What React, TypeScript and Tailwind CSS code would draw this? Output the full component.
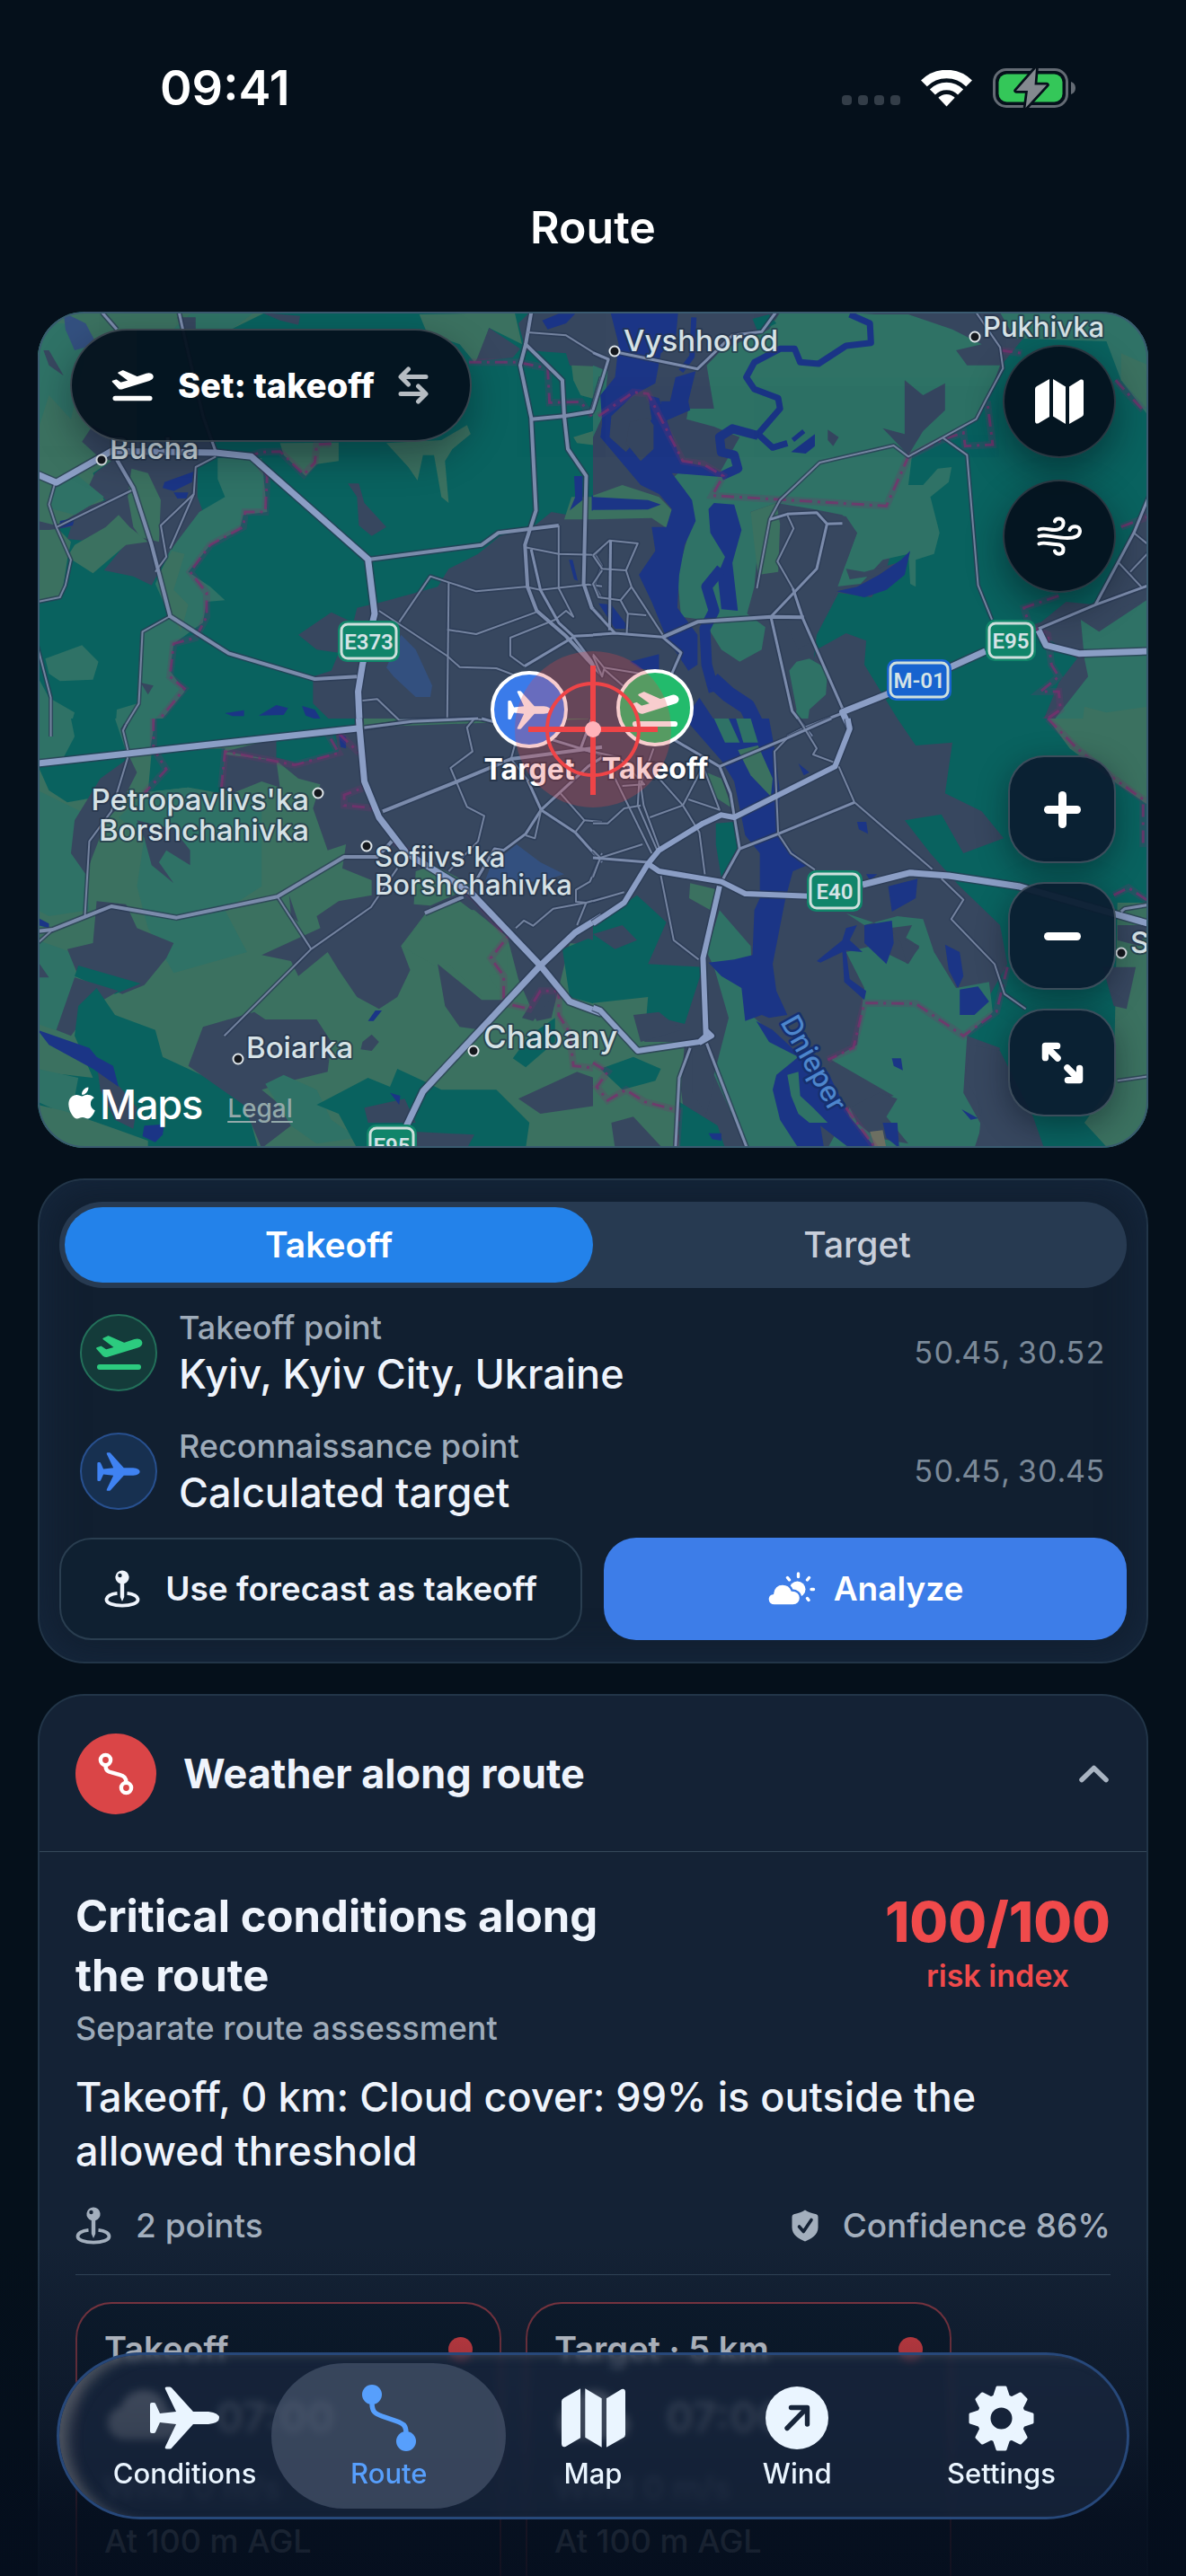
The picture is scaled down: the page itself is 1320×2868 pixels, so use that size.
import { useState } from "react";
import type { ReactNode } from "react";
import { FaApple } from "react-icons/fa";
import { BsCloudFill } from "react-icons/bs";

type IconProps = { className?: string };

/* ---------- icons ---------- */

function PlaneTakeoff({ className }: IconProps) {
  return (
    <svg viewBox="0 0 47 35" className={className} fill="currentColor" aria-hidden="true">
      <path
        d="M1.5 12.6L5.4 11.2L10.4 14.6L19.8 11.9L8 3.2L12.8 1L28.6 7.9L39 4.4C43 3.1 45.6 4.8 45.9 6.8C46.2 9 44.4 10.5 42 11.3L12 20.6C10.4 21 9.2 20.9 8 19.8Z"
        stroke="currentColor"
        strokeWidth="1.6"
        strokeLinejoin="round"
      />
      <rect x="1.5" y="28.8" width="44" height="5.4" rx="2.7" />
    </svg>
  );
}

function Airplane({ className }: IconProps) {
  return (
    <svg viewBox="0 0 77 70" className={className} fill="currentColor" aria-hidden="true">
      <path d="M0 20Q0 18 2 18H4Q5.5 18 6 19L11 30L29 28L17 3Q16 .5 18.5 .5H22Q23.5 .5 24.5 2L48 28H65Q77 29.5 77 35Q77 40.5 65 42H48L24.5 68Q23.5 69.5 22 69.5H18.5Q16 69.5 17 67L29 42L11 40L6 51Q5.5 52 4 52H2Q0 52 0 50Z" />
    </svg>
  );
}

function MapIcon({ className }: IconProps) {
  return (
    <svg viewBox="0 0 54 50" className={className} fill="currentColor" aria-hidden="true">
      <path d="M2 8L16 0V42L3.4 49.4Q0 50.4 0 46.5V11Q0 9 2 8Z" />
      <path d="M20 0L34 8.5V50L20 41.5Z" />
      <path d="M38 8.5L50.8 .6Q54 -.4 54 3.2V39Q54 41 52 42L38 50Z" />
    </svg>
  );
}

function WindIcon({ className }: IconProps) {
  return (
    <svg
      viewBox="0 0 50 46"
      className={className}
      fill="none"
      stroke="currentColor"
      strokeWidth="4"
      strokeLinecap="round"
      aria-hidden="true"
    >
      <path d="M2.5 15.5C8 13 13 16 20 16C27 16 30 12 29.5 7.5C29 2.5 21 2 20 6.5" />
      <path d="M2.5 23C10 20 18 25 34 25C43 25 48 22 48 17C48 11 38 10.5 36.5 16" />
      <path d="M2.5 31.5C8 29 14 32 21 32C27 32 29.5 34.5 29.5 38C29.5 44 21 44 20 39.5" />
    </svg>
  );
}

function SwapIcon({ className }: IconProps) {
  return (
    <svg
      viewBox="0 0 34 42"
      className={className}
      fill="none"
      stroke="currentColor"
      strokeWidth="5"
      strokeLinecap="round"
      strokeLinejoin="round"
      aria-hidden="true"
    >
      <path d="M31 11.5H4M11.5 3L3 11.5L11.5 20" />
      <path d="M3 30.5H30M22.5 22L31 30.5L22.5 39" />
    </svg>
  );
}

function RouteSolid({ className }: IconProps) {
  return (
    <svg viewBox="0 0 60 74" className={className} fill="currentColor" aria-hidden="true">
      <circle cx="11" cy="11" r="11" />
      <circle cx="49" cy="63" r="11" />
      <path
        d="M11 20C11 30 14 32 22 35L38 40.5C46 43.5 49 45 49 54"
        fill="none"
        stroke="currentColor"
        strokeWidth="5.5"
      />
    </svg>
  );
}

function RouteOutline({ className }: IconProps) {
  return (
    <svg
      viewBox="0 0 40 48"
      className={className}
      fill="none"
      stroke="currentColor"
      strokeWidth="4.4"
      aria-hidden="true"
    >
      <circle cx="8.5" cy="8.5" r="5.6" />
      <circle cx="31.5" cy="39.5" r="5.6" />
      <path d="M8.5 14C8.5 20.5 11 21.5 16 22.7L24 24.8C29 26.2 31.5 28 31.5 34" />
    </svg>
  );
}

function PinIcon({ className }: IconProps) {
  return (
    <svg viewBox="0 0 40 42" className={className} aria-hidden="true">
      <path
        fill="currentColor"
        fillRule="evenodd"
        d="M20 .5A7.5 7.5 0 0 1 22.2 15.2V30L20 35L17.8 30V15.2A7.5 7.5 0 0 1 20 .5ZM17.5 3.8A2.2 2.2 0 1 0 17.5 8.2A2.2 2.2 0 1 0 17.5 3.8Z"
      />
      <path
        fill="none"
        stroke="currentColor"
        strokeWidth="3.8"
        d="M14.5 25.8C7 26.5 2.5 29.5 2.5 33C2.5 36.8 10 39.6 20 39.6S37.5 36.8 37.5 33C37.5 29.5 33 26.5 25.5 25.8"
      />
    </svg>
  );
}

function CloudSunIcon({ className }: IconProps) {
  return (
    <svg viewBox="0 0 54 38" className={className} aria-hidden="true">
      <circle cx="33.5" cy="19.5" r="9" fill="currentColor" />
      <g stroke="currentColor" strokeWidth="3.4" strokeLinecap="round">
        <path d="M34.5 2V5.5M22.5 6.5L24.5 9M46.5 6.5L44.5 9M49 19.5H51.5M46 31.5L44.5 29.5" />
      </g>
      <path
        d="M8 37.5C3.5 37.5 .5 34.5 .5 30.5C.5 27 3 24.5 6 24C6.5 17.5 11 13.5 17 13.5C22.5 13.5 26 16.5 27.5 20.5C33 20.5 37 24 37 29C37 34 33.5 37.5 28.5 37.5Z"
        fill="currentColor"
        stroke="#3d7de8"
        strokeWidth="2.4"
      />
    </svg>
  );
}

function ShieldCheck({ className }: IconProps) {
  return (
    <svg viewBox="0 0 30 36" className={className} aria-hidden="true">
      <path
        fill="currentColor"
        d="M15 .5C18 2.5 22 4 27.5 5.2Q29.5 5.8 29.5 8V20C29.5 28 22 32.5 15 35.5C8 32.5 .5 28 .5 20V8Q.5 5.8 2.5 5.2C8 4 12 2.5 15 .5Z"
      />
      <path
        d="M8.5 19L13.3 24.5L22 11.5"
        fill="none"
        stroke="#142235"
        strokeWidth="3.6"
        strokeLinecap="round"
        strokeLinejoin="round"
      />
    </svg>
  );
}

function ExpandIcon({ className }: IconProps) {
  return (
    <svg
      viewBox="0 0 48 48"
      className={className}
      fill="none"
      stroke="currentColor"
      strokeWidth="7.5"
      strokeLinecap="round"
      strokeLinejoin="round"
      aria-hidden="true"
    >
      <path d="M18 4.5H4.5V18M6 6L18.5 18.5" />
      <path d="M30 43.5H43.5V30M42 42L29.5 29.5" />
    </svg>
  );
}

function WindTabIcon({ className }: IconProps) {
  return (
    <svg viewBox="0 0 70 70" className={className} aria-hidden="true">
      <circle cx="35" cy="35" r="35" fill="currentColor" />
      <path
        d="M24 46.5L46 24M28.5 23.5H46.5V42"
        fill="none"
        stroke="#17253a"
        strokeWidth="5.4"
        strokeLinecap="round"
        strokeLinejoin="round"
      />
    </svg>
  );
}

function GearIcon({ className }: IconProps) {
  return (
    <svg viewBox="-36.5 -36.5 73 73" className={className} aria-hidden="true">
      <circle r="19.5" fill="none" stroke="currentColor" strokeWidth="15" />
      {[0, 45, 90, 135, 180, 225, 270, 315].map((a) => (
        <path
          key={a}
          d="M-8 -24L-4.5 -34.5H4.5L8 -24Z"
          transform={`rotate(${a})`}
          fill="currentColor"
          stroke="currentColor"
          strokeWidth="3"
          strokeLinejoin="round"
        />
      ))}
    </svg>
  );
}

function WifiIcon({ className }: IconProps) {
  return (
    <svg viewBox="0 0 57 41" className={className} fill="none" stroke="currentColor" aria-hidden="true">
      <path d="M3.4 14.9A35.5 35.5 0 0 1 53.6 14.9" strokeWidth="9.5" />
      <path d="M12.9 24.4A22 22 0 0 1 44.1 24.4" strokeWidth="8.5" />
      <path d="M28.5 40.5L19.3 30.8A13 13 0 0 1 37.7 30.8Z" fill="currentColor" stroke="none" />
    </svg>
  );
}

function BatteryIcon({ className }: IconProps) {
  return (
    <svg viewBox="0 0 92 46" className={className} aria-hidden="true">
      <rect x="1.5" y="2.5" width="81" height="41" rx="13.5" fill="none" stroke="#646b74" strokeWidth="3" />
      <path d="M87 16V30C90 29 92 26.5 92 23S90 17 87 16Z" fill="#646b74" />
      <rect x="6.5" y="7.5" width="71" height="31" rx="9" fill="#34c759" />
      <path
        d="M48 1L26 26H39L36.5 45L60 19.5H46.5Z"
        fill="#83898f"
        stroke="#06101b"
        strokeWidth="5.5"
        strokeLinejoin="round"
        paintOrder="stroke"
      />
    </svg>
  );
}

/* ---------- map ---------- */

const C = {
  urban: "#37475f",
  forest: "#09625f",
  meadow: "#2f7266",
  field: "#3b7160",
  water: "#1b3586",
  park: "#33507f",
};

type Area = [string, string];
type Road = [number, string];
type Sheet = { x: number; y: number; areas: Area[]; water: Road[]; borders: string[]; roads: Road[] };

const sheets: Sheet[] = [
  {
    x: 30,
    y: 340,
    areas: [
      [C.forest, "0,0 1570,0 1570,1382 0,1382"],
      [C.field, "29,24 650,24 560,78 300,80 300,450 180,450 230,520 180,560 210,650 80,740 120,790 110,850 95,970 29,990"],
      [C.meadow, "29,60 130,60 160,160 120,380 60,300 29,420"],
      [C.meadow, "450,24 620,24 560,78 400,78"],
      [C.field, "690,460 850,458 850,520 790,530 760,570 700,500"],
      [C.park, "100,24 160,60 190,130 130,150 105,80"],
      [C.urban, "60,150 100,235 60,200 45,150"],
      [C.urban, "640,24 745,35 740,65 690,50"],
      [C.urban, "410,40 460,40 460,78 420,78"],
      [C.urban, "150,455 180,400 260,455 510,455 525,500 465,540 465,640 480,690 440,760 385,830 340,935 290,905 210,885 260,810 270,770 235,735 150,785 110,780 120,740 60,750 30,750 30,720 80,735 170,670 215,650 170,600 185,560 230,520 190,500"],
      [C.meadow, "80,600 130,560 210,640 130,700 70,680 60,630"],
      [C.field, "285,545 330,560 365,650 360,790 310,775 290,740 275,640"],
      [C.field, "250,700 280,740 330,790 270,800 180,895 110,840 130,800 215,740"],
      [C.meadow, "520,510 640,510 655,690 590,700 580,750 500,800 440,890 500,940 540,985 490,990 480,1060 400,1130 390,1220 430,1290 370,1380 340,1440 240,1440 245,1350 300,1330 310,1090 390,1040 350,930 390,820 470,690 540,640 520,580"],
      [C.field, "395,820 430,830 400,950 440,1000 420,1090 380,1000 355,910"],
      [C.meadow, "50,1180 150,1135 195,1190 180,1250 90,1255 60,1230"],
      [C.meadow, "29,1240 60,1310 130,1360 110,1440 29,1440"],
      [C.urban, "60,1440 110,1400 130,1440"],
      [C.urban, "310,1260 345,1270 330,1300"],
      [C.field, "980,460 1130,450 1200,400 1210,430 1160,480 1140,520 1150,660 1130,640 1110,500 1080,500 1065,585 1040,540"],
      [C.urban, "875,595 905,595 920,660 980,740 940,770 905,735 900,640"],
      [C.urban, "1568,720 1430,690 1380,740 1290,770 1230,830 1150,880 1120,940 970,990 900,1010 890,1060 830,1025 740,1100 790,1150 850,1160 830,1220 780,1240 780,1330 830,1390 820,1440 1568,1440"],
      [C.urban, "1370,24 1568,24 1568,230 1480,200 1470,160 1360,150 1340,60"],
      [C.field, "1070,30 1330,24 1350,130 1260,75 1235,170 1220,190 1180,130 1090,90"],
      [C.urban, "1260,75 1345,145 1325,175 1225,185"],
      [C.field, "1485,200 1568,205 1568,320 1510,300 1490,250"],
      [C.field, "1490,440 1568,410 1568,470 1500,460"],
      [C.field, "1485,640 1568,640 1568,715 1465,715"],
      [C.water, "375,590 455,555 450,590 400,620 370,610"],
      [C.water, "400,625 440,625 435,645 410,645"],
      [C.water, "90,720 130,710 125,735 90,745"],
      [C.water, "1405,50 1450,28 1495,28 1470,60 1420,80"],
      [C.water, "1492,570 1515,570 1515,650 1480,685 1495,640"],
      [C.water, "1540,635 1570,635 1570,685 1540,685"],
      [C.water, "540,1362 592,1352 592,1372 560,1372"],
      [C.water, "632,1370 680,1335 712,1345 700,1368"],
      [C.water, "750,1338 785,1350 805,1390 760,1370"],
      [C.water, "1478,850 1488,850 1502,920 1492,915"],
      [C.park, "980,1210 1020,1100 1060,1150 1105,1270 1100,1308 1060,1308 1000,1240"],
    ],
    water: [],
    borders: [
      "1205,190 1340,190 1420,210 1425,325 1510,322 1540,370",
      "830,462 790,465 785,525 755,565 690,488 640,490 615,500 655,570 650,690 595,690 590,740 500,800 445,890 490,960 490,1040 460,1110 400,1130 390,1240 430,1280 350,1400 345,1440",
    ],
    roads: [
      [3, "75,600 60,665 80,740 120,850 105,935 90,975 29,990"],
      [3, "82,740 285,618"],
      [3, "515,505 460,540 455,630 365,735 380,840 350,890"],
      [3, "455,630 390,812"],
      [3, "390,1038 315,1090 305,1330 260,1420"],
      [3, "29,1140 65,1310 65,1440"],
      [3, "1015,1058 1100,905 1150,925 1225,955 1360,940 1400,950 1530,932 1568,938"],
      [3, "1150,925 1146,1380"],
      [3, "960,1020 1145,1170 1180,1208 1280,1212 1340,1240"],
      [3, "1146,1083 1225,1098 1388,1025"],
      [3, "1450,735 1450,945 1490,1040 1470,1020 1440,1050 1318,1110 1318,1170 1357,1205"],
      [4, "1375,815 1400,950 1450,1060 1490,1105 1568,1100"],
      [4, "1357,1205 1490,1108 1568,1235"],
      [3, "1358,808 1450,830 1550,833 1568,810"],
      [3, "1550,833 1568,870 1548,935 1568,980"],
      [3, "915,1320 955,1315 1015,1385 1220,1380 1300,1395"],
      [4, "920,1412 1050,1388"],
      [4, "205,24 245,80"],
      [4, "415,24 425,80 480,370 515,490"],
      [5, "245,515 290,610 340,800 390,1038 550,1162 785,1248 900,1240"],
      [5, "935,848 1240,800 1285,760 1450,735"],
      [5, "1375,24 1360,130 1345,200 1375,375 1388,685 1358,800 1365,940 1390,1020 1470,1105 1568,1235"],
      [5, "1360,130 1460,250 1465,370 1475,480 1525,570 1518,930 1540,1010 1568,1045"],
      [5, "1375,380 1465,370 1540,355 1568,240"],
      [3, "1365,90 1470,100 1568,175"],
      [8, "29,565 80,592 190,515 230,487 515,492 612,505 930,848 948,1030 915,1200 903,1290 907,1400"],
    ],
  },
  {
    x: 660,
    y: 340,
    areas: [
      [C.urban, "0,0 1570,0 1570,1382 0,1382"],
      [C.forest, "860,500 960,440 1050,380 1120,190 1180,100 1515,100 1515,640 1430,860 1370,1000 1190,1070 1320,1180 1270,1260 1230,1380 1270,1440 860,1440 810,1340 740,1200 745,1120 690,1095 610,1150 570,1300 600,1200 610,1100 670,960 760,975 800,880 860,640"],
      [C.meadow, "510,24 690,24 770,30 860,30 980,80 1060,130 990,150 1020,200 1110,200 1080,300 1045,380 960,440 870,500 860,600 900,600 940,545 978,540 970,590 920,640 945,760 930,830 880,850 880,940 865,930 860,830 790,850 730,930 660,940 690,860 720,760 680,700 600,680 500,660 430,690 450,800 440,940 420,1030 470,1075 460,1150 400,1190 350,1150 300,1050 240,1040 230,900 270,720 215,580 260,530 345,560 400,440 330,405 255,380 260,345 330,345 310,200 350,150 480,80"],
      [C.field, "430,690 500,660 510,730 505,890 450,900 440,800"],
      [C.urban, "535,720 620,690 690,705 720,760 690,860 650,1000 600,1120 560,1150 500,1000 545,940 510,860"],
      [C.meadow, "555,1190 590,1180 640,1215 635,1300 590,1350 580,1440 540,1440 555,1350 535,1220"],
      [C.urban, "850,250 900,300 960,260 960,350 900,420 860,500 790,410 850,430"],
      [C.urban, "640,415 670,440 655,470 640,450"],
      [C.urban, "690,880 740,890 860,850 780,900 700,915"],
      [C.forest, "435,45 480,30 500,60 450,90"],
      [C.meadow, "1110,24 1515,24 1515,370 1440,250 1400,120 1150,110"],
      [C.field, "1440,160 1515,200 1515,350 1440,250"],
      [C.urban, "1370,1000 1480,740 1515,640 1515,980 1440,1010 1380,1090 1330,1050 1190,1090 1290,990"],
      [C.meadow, "1330,1050 1380,1090 1515,980 1515,1440 1280,1440 1260,1380 1350,1240 1340,1180"],
      [C.field, "1330,1440 1340,1340 1400,1360 1515,1340 1515,1440"],
      [C.meadow, "0,200 40,220 30,360 0,440"],
      [C.field, "0,635 80,600 180,640 220,690 220,760 160,710 0,715"],
      [C.water, "48,24 232,24 225,120 185,160 170,260 110,300 50,370 45,440 90,490 160,380 150,300 180,310 200,380 240,520 330,545 370,575 215,560 270,650 280,720 250,800 235,900 230,1010 285,1100 285,1200 260,1220 200,1110 160,990 125,900 170,820 160,740 200,740 215,680 180,630 130,600 20,440 25,390 20,300 60,240 70,130"],
      [C.urban, "100,390 150,375 165,400 165,480 130,520 90,460"],
      [C.water, "330,660 385,665 405,750 380,860 395,1020 350,1015 340,900 360,840 320,760 315,680"],
      [C.water, "225,240 280,220 260,320 265,350 190,390 185,320 210,320"],
      [C.water, "0,640 150,650 185,665 150,682 0,683"],
      [C.water, "865,820 850,900 800,950 740,975 665,955 720,940 780,900 840,850"],
      [C.water, "100,1190 180,1165 180,1215 130,1215"],
      [C.water, "15,995 50,1000 100,1080 60,1080"],
      [C.water, "290,1310 360,1440 250,1440 240,1400"],
      [C.water, "540,490 605,430 605,470 580,495"],
    ],
    water: [
      [7, "700,30 755,60 758,125 690,135 615,195 565,190 550,145 510,145 440,190 418,240 440,280 505,310 510,345 450,430 490,475 530,460"],
      [10, "450,435 380,412 345,440 350,490 385,500 395,545 350,570"],
      [5, "545,450 575,420"],
      [12, "350,880 310,940 330,1020 305,1080 310,1200 330,1290"],
      [18, "325,1250 370,1300 420,1340 460,1440"],
      [6, "275,40 270,170 240,220"],
    ],
    borders: [
      "15,370 110,290 150,295 245,520 300,530 355,570 325,635 800,670 860,505 950,450 1010,425 1015,470 1090,465 1075,320",
      "1110,150 1170,160",
      "1425,250 1500,350",
      "1440,740 1515,705",
      "1270,970 1175,1010 1190,1070 1240,1100 1250,1200 1270,1240 1220,1290 1270,1290 1275,1350 1240,1380 1290,1440",
    ],
    roads: [
      [3, "0,835 45,785 122,795 90,885 25,880 0,835"],
      [4, "48,785 45,1085"],
      [3, "90,885 105,940 75,985 15,975 0,930 25,885"],
      [3, "105,940 190,1100"],
      [3, "75,985 95,1030 145,1035"],
      [3, "95,1030 92,1095"],
      [4, "0,1015 60,1095"],
      [4, "0,1100 60,1095 190,1108 240,1160 215,1230"],
      [3, "0,1165 30,1210 130,1230"],
      [3, "0,1170 25,1240 30,1215 100,1290"],
      [4, "0,158 42,180 0,350"],
      [4, "60,155 285,212 380,100 460,88 498,24"],
      [3, "1045,24 1110,140 1118,210 1070,320 1045,380 860,505 820,468 618,525 510,650 482,715 447,945"],
      [3, "955,443 1020,500 1050,935 1088,1050"],
      [4, "482,715 530,697 610,692 638,730 680,728"],
      [3, "530,700 547,745 503,855 545,945"],
      [4, "638,730 610,880 485,1040 543,1355 597,1440"],
      [4, "545,945 572,1045 680,1345"],
      [5, "190,1108 285,1057 485,1040 575,1042"],
      [4, "530,1440 580,1410 680,1362"],
      [3, "1475,760 1515,800"],
      [3, "1430,855 1495,940"],
      [3, "1465,890 1515,825"],
      [4, "1370,1000 1475,760 1515,640"],
      [4, "1215,1080 1370,1000 1515,935"],
      [8, "1215,1085 1235,1135 1325,1163 1515,1155"],
      [8, "695,1400 700,1410 680,1358 800,1300 980,1205 1070,1155"],
    ],
  },
  {
    x: 30,
    y: 800,
    areas: [
      [C.field, "0,0 1570,0 1570,1470 0,1470"],
      [C.forest, "29,0 900,0 890,40 29,155"],
      [C.meadow, "29,0 120,0 130,60 100,130 29,140"],
      [C.meadow, "240,0 350,0 335,110 270,110"],
      [C.forest, "29,155 275,130 200,260 110,280 60,240"],
      [C.forest, "340,110 540,100 530,250 440,230 330,245"],
      [C.meadow, "330,245 440,230 640,300 640,560 540,640 600,780 400,850 330,700 300,560 320,400 250,330"],
      [C.meadow, "29,240 180,330 160,500 170,640 60,660 29,640"],
      [C.meadow, "29,740 120,780 140,900 100,1050 29,1020"],
      [C.urban, "900,30 1568,0 1568,760 1480,750 1430,1000 1390,1010 1340,870 1310,730 1220,640 1100,630 1020,760 1045,840 1010,930 960,970 900,930 850,840 820,780 740,860 720,810 640,790 800,700 790,660 850,610 940,590 940,540 860,500 870,420 820,440 780,300 800,220 740,200 680,140 540,110 700,60"],
      [C.forest, "680,60 840,45 850,110 740,150 680,130"],
      [C.urban, "540,120 680,140 690,230 640,210 560,250 530,230"],
      [C.field, "1060,510 1110,490 1220,560 1100,625 1055,620"],
      [C.field, "1020,760 1100,640 1180,610 1310,730 1310,840 1260,860 1300,930 1240,930 1150,820 1120,830"],
      [C.urban, "200,200 280,130 300,180 250,300 220,330 160,520 120,450 130,340"],
      [C.urban, "300,340 400,370 445,440 445,490 380,440 360,480 400,550 340,490 320,400"],
      [C.urban, "190,610 270,620 300,700 400,750 380,800 320,890 260,920 140,860 110,770 180,750"],
      [C.urban, "715,590 740,680 720,660"],
      [C.forest, "140,825 310,885 240,920 130,860"],
      [C.urban, "130,865 250,910 180,960 120,1060 80,1040"],
      [C.urban, "29,810 60,865 29,865"],
      [C.forest, "190,900 240,990 350,1040 370,1130 440,1170 560,1240 600,1300 630,1435 29,1435 29,1180 110,1190 180,1200 130,1060 140,960"],
      [C.meadow, "29,1170 140,1200 120,1330 29,1280"],
      [C.field, "29,1290 100,1310 240,1370 330,1410 330,1435 60,1435"],
      [C.urban, "190,1150 260,1240 300,1300 290,1370 240,1340 200,1240"],
      [C.urban, "480,1030 620,980 650,1005 790,1005 830,1080 820,1180 720,1210 640,1240 700,1300 720,1360 640,1435 590,1290 440,1160"],
      [C.meadow, "650,1220 700,1190 790,1240 830,1340 900,1400 790,1420 720,1360"],
      [C.forest, "790,1290 930,1200 990,1230 1010,1170 1080,1210 1130,1240 1280,1240 1370,1350 1360,1435 900,1435 850,1320"],
      [C.urban, "920,1300 1030,1270 1060,1350 930,1350"],
      [C.urban, "915,1080 940,1055 960,1080 940,1110 910,1105"],
      [C.urban, "1120,820 1240,940 1320,940 1240,1040 1180,1030 1140,960"],
      [C.urban, "1390,920 1440,920 1380,1010 1350,1000"],
      [C.urban, "1340,1270 1500,1180 1568,1210 1568,1290 1400,1320"],
      [C.urban, "1060,1380 1220,1390 1200,1435 1060,1435"],
      [C.forest, "1460,770 1530,735 1568,750 1568,960 1480,930"],
      [C.forest, "1370,1060 1440,1000 1440,1080 1360,1165 1325,1135"],
      [C.water, "29,1040 170,1100 190,1130 235,1160 250,1230 180,1170 60,1090"],
      [C.water, "320,1360 375,1355 370,1390 350,1415 315,1395"],
      [C.water, "930,1010 950,975 968,975 945,1010"],
      [C.water, "990,1250 1018,1260 1015,1290"],
      [C.water, "29,665 60,685 60,700 29,690"],
      [C.water, "850,50 870,60 870,100 855,95"],
      [C.park, "1265,490 1335,420 1400,480 1465,520 1400,545 1250,540"],
    ],
    water: [],
    borders: [
      "345,0 345,100 380,170 320,250",
      "530,230 540,110 730,155 850,115 820,50",
      "850,50 915,125 920,230 865,255 865,290 950,300",
      "1000,410 1220,600 1310,730 1265,800 1300,860 1300,950 1370,970 1400,910 1450,910 1450,990 1480,1050 1490,1160 1568,1170",
    ],
    roads: [
      [3, "29,750 70,705"],
      [3, "158,660 170,410 230,310 275,130"],
      [3, "275,105 262,40 270,20"],
      [3, "683,595 775,770 538,1060"],
      [3, "775,770 938,630 1010,500"],
      [3, "1220,0 1200,30 1215,110 1155,165 1200,295 1247,325 1230,410 1150,510"],
      [4, "1365,205 1402,305 1495,380 1568,480"],
      [4, "1402,305 1360,385 1300,440 1275,435 1225,540"],
      [3, "1402,305 1385,400 1360,390"],
      [4, "1402,305 1530,160 1568,130"],
      [3, "1320,135 1330,90"],
      [3, "1320,135 1365,205"],
      [3, "1455,250 1520,340 1495,380"],
      [3, "1520,340 1568,345"],
      [3, "1500,690 1525,615 1435,635 1380,692 1355,675 1333,700"],
      [3, "1568,600 1525,615 1497,612 1497,572 1535,545 1568,450"],
      [4, "920,30 1050,10 1230,0"],
      [4, "1430,70 1510,100 1568,120"],
      [4, "1240,0 1300,20"],
      [4, "1568,120 1510,100 1540,0"],
      [5, "970,310 1170,212 1320,135 1568,95"],
      [5, "1085,650 1190,595"],
      [5, "29,710 70,705 230,627 408,665 683,595 865,462 955,462 995,410"],
      [8, "29,150 907,32"],
      [8, "905,0 907,32 920,210 960,330 1035,450 1210,580 1400,825 1480,945 1568,985"],
      [8, "1568,660 1495,715 1400,825 1080,1245 1035,1360"],
    ],
  },
  {
    x: 660,
    y: 800,
    areas: [
      [C.urban, "0,0 1570,0 1570,1470 0,1470"],
      [C.forest, "830,0 1515,0 1515,1435 1220,1435 1200,1350 1100,1150 1110,1100 1020,1060 1130,820 1110,690 1000,560 920,450 850,340 950,320 1010,450 1120,400 1060,310 960,250 980,80 880,90"],
      [C.field, "1240,0 1515,0 1515,290 1420,210 1300,100"],
      [C.field, "1430,615 1515,615 1515,1435 1400,1430 1340,1350 1420,1210"],
      [C.urban, "1390,830 1480,830 1455,970 1420,960"],
      [C.urban, "1430,690 1515,690 1490,760 1430,740"],
      [C.meadow, "690,650 740,690 830,660 900,670 930,780 990,900 1080,880 1090,980 1020,1060 1010,1250 1060,1360 1040,1435 640,1435 700,1300 820,1260 650,1140 720,1090 740,900 690,780 760,760 860,820 890,760 810,700"],
      [C.urban, "810,700 870,690 850,740 890,765 855,820 840,750"],
      [C.urban, "700,1300 780,1250 830,1270 800,1330 860,1420 770,1400 720,1350"],
      [C.urban, "1030,1090 1110,1110 1200,1330 1230,1435 1050,1435 1060,1300 1015,1200"],
      [C.forest, "0,690 120,590 200,680 150,820 300,830 250,1020 120,980 0,950"],
      [C.urban, "0,720 80,690 120,740 60,770"],
      [C.field, "0,950 150,930 140,1080 250,1080 240,1240 260,1435 0,1435"],
      [C.urban, "110,990 180,980 240,1040 130,1080"],
      [C.forest, "20,1170 110,1130 185,1170 170,1210 80,1240"],
      [C.urban, "50,1350 110,1330 190,1435 60,1435"],
      [C.forest, "235,1280 340,1360 360,1435 235,1435"],
      [C.meadow, "345,640 430,760 440,1000 560,1130 500,1200 520,1340 620,1435 420,1435 330,1190 370,1000 330,830 310,780"],
      [C.forest, "335,350 385,345 395,430 350,530 335,420"],
      [C.field, "265,550 335,570 320,640 262,600"],
      [C.field, "310,180 350,200 380,300 330,260"],
      [C.urban, "270,1100 320,1110 330,1220 310,1320 270,1250"],
      [C.water, "250,0 480,0 495,100 510,250 500,380 540,440 585,490 545,510 525,600 490,820 500,910 530,990 480,1000 460,990 415,1010 405,900 350,860 315,815 385,805 435,790 440,640 455,600 455,450 415,390 385,210 350,140"],
      [C.field, "395,105 450,90 490,200 485,260 430,190"],
      [C.meadow, "330,0 370,0 400,80 360,80"],
      [C.meadow, "390,0 430,0 450,80 410,80"],
      [C.water, "445,1010 490,1040 560,1120 640,1180 700,1330 770,1435 700,1435 620,1360 630,1435 560,1435 510,1340 490,1240 500,1190 560,1130 480,1080"],
      [C.meadow, "530,1190 560,1180 565,1260 600,1300 640,1350 590,1350 560,1320 540,1260"],
      [C.water, "315,1385 350,1385 350,1410 325,1405"],
      [C.water, "805,560 885,535 880,600 815,645"],
      [C.water, "740,690 815,675 820,750 800,820 740,750"],
      [C.water, "610,810 680,740 690,700 720,690 700,740 735,780 690,775 700,870 745,910 740,940 685,880 680,780 620,815"],
      [C.water, "960,755 1000,780 1010,860 995,900 970,840"],
      [C.water, "1000,905 1050,895 1080,945 1040,990 1000,990"],
      [C.water, "720,345 745,345 750,385 725,370"],
      [C.water, "560,150 590,180 575,190"],
      [C.water, "745,520 775,520 755,540"],
      [C.water, "815,1135 840,1135 845,1175 820,1160"],
      [C.water, "1005,1305 1050,1335 1030,1340"],
      [C.water, "790,1350 830,1350 835,1435 800,1400"],
      ["#6d6f62", "755,1380 790,1375 800,1435 770,1435"],
    ],
    water: [],
    borders: [
      "1240,0 1320,100 1420,200 1500,270 1500,430",
      "1130,830 1100,980 1010,1060 880,952 740,950 710,1100 640,1140",
      "690,1300 770,1435",
      "0,1150 40,1180 10,1230 40,1275 90,1240 140,1280 235,1310 228,1435",
      "1420,590 1460,565 1515,610",
    ],
    roads: [
      [3, "0,610 85,580"],
      [3, "0,350 40,350 85,300 130,290"],
      [3, "155,330 245,290 180,200"],
      [3, "245,290 290,380 305,520"],
      [3, "245,290 300,160"],
      [3, "260,270 345,305 300,160"],
      [3, "60,200 100,300 160,450"],
      [3, "130,130 122,290 175,440"],
      [3, "165,100 130,220 138,290 180,430"],
      [3, "0,110 70,130 140,220 80,225"],
      [3, "0,530 20,465 135,420"],
      [3, "0,440 20,465"],
      [3, "185,525 220,740 288,805"],
      [3, "560,0 610,100 600,120 655,145"],
      [3, "670,160 713,280 925,503"],
      [4, "400,435 505,385 713,280"],
      [3, "530,65 495,110 505,385 540,450 605,505"],
      [3, "950,535 1010,605 977,670 1095,820 1122,920 1180,970"],
      [3, "1430,1210 1515,1195"],
      [4, "345,160 530,65 650,0"],
      [4, "355,535 400,435 385,325 375,250 345,160 220,70"],
      [4, "0,465 150,480"],
      [4, "265,1100 235,1200 225,1435"],
      [4, "310,1085 420,1435"],
      [4, "1440,645 1450,635 1515,622"],
      [7, "695,0 700,35 660,160 385,330 350,322 300,350 180,440 150,485 85,615 0,685"],
      [7, "150,485 180,510 350,545 415,585 590,593"],
      [8, "735,555 865,515 970,525 1160,560 1430,655 1515,685"],
      [7, "345,560 300,800 308,1060 290,1080 122,1110 20,975 0,965"],
      [6, "308,1040 325,1060 290,1085"],
    ],
  },
];

function RoadSign({ x, y, w, label, fill }: { x: number; y: number; w: number; label: string; fill: string }) {
  return (
    <g>
      <rect x={x} y={y} width={w} height="46" rx="10" fill={fill} />
      <rect x={x + 4} y={y + 4} width={w - 8} height="38" rx="7" fill="none" stroke="#cfe0dd" strokeWidth="3" />
      <text
        x={x + w / 2}
        y={y + 32}
        textAnchor="middle"
        className="font-['Roboto',sans-serif] text-[24px] font-semibold"
        fill="#d5e3e6"
      >
        {label}
      </text>
    </g>
  );
}

type Town = { x: number; y: number; lines: string[]; size: number; dot: [number, number]; end?: boolean };

const towns: Town[] = [
  { x: 694, y: 391, lines: ["Vyshhorod"], size: 33, dot: [684, 391] },
  { x: 1094, y: 375, lines: ["Pukhivka"], size: 31, dot: [1085, 375] },
  { x: 122, y: 511, lines: ["Bucha"], size: 33, dot: [113, 512] },
  { x: 344, y: 902, lines: ["Petropavlivs'ka", "Borshchahivka"], size: 33, dot: [354, 883], end: true },
  { x: 417, y: 965, lines: ["Sofiivs'ka", "Borshchahivka"], size: 31, dot: [408, 942] },
  { x: 274, y: 1178, lines: ["Boiarka"], size: 33, dot: [265, 1179] },
  { x: 538, y: 1167, lines: ["Chabany"], size: 35, dot: [527, 1170] },
  { x: 1258, y: 1061, lines: ["S"], size: 33, dot: [1248, 1061] },
];

function RouteMap() {
  return (
    <svg
      viewBox="42 347 1236 931"
      preserveAspectRatio="xMidYMid slice"
      className="block h-full w-full"
      role="img"
      aria-label="Map of Kyiv with takeoff and target points"
    >
      {sheets.map((s) => (
        <g key={`${s.x}-${s.y}`} transform={`translate(${s.x} ${s.y}) scale(0.40816 0.33333)`}>
          {s.areas.map(([fill, pts], i) => (
            <polygon key={i} points={pts} fill={fill} />
          ))}
          {s.water.map(([w, pts], i) => (
            <polyline
              key={i}
              points={pts}
              fill="none"
              stroke={C.water}
              strokeWidth={w}
              strokeLinejoin="round"
              vectorEffect="non-scaling-stroke"
            />
          ))}
          {s.borders.map((pts, i) => (
            <g key={i} fill="none" stroke="#7b2f6e">
              <polyline points={pts} strokeWidth="8" opacity="0.22" vectorEffect="non-scaling-stroke" />
              <polyline points={pts} strokeWidth="3" strokeDasharray="14 6 3 6" opacity="0.75" vectorEffect="non-scaling-stroke" />
            </g>
          ))}
        </g>
      ))}
      {sheets.map((s) => (
        <g
          key={`${s.x}-${s.y}`}
          transform={`translate(${s.x} ${s.y}) scale(0.40816 0.33333)`}
          fill="none"
          strokeLinejoin="round"
        >
          {s.roads.map(([w, pts], i) => (
            <polyline key={i} points={pts} stroke="#2a3a55" strokeWidth={w + 2} opacity="0.7" vectorEffect="non-scaling-stroke" />
          ))}
          {s.roads.map(([w, pts], i) => (
            <polyline
              key={i}
              points={pts}
              stroke={w > 5 ? "#8b9ec5" : w > 3 ? "#7b8bab" : "#74839f"}
              strokeWidth={w > 3 ? w - 1 : 2}
              vectorEffect="non-scaling-stroke"
            />
          ))}
        </g>
      ))}

      <RoadSign x={376} y={691} w={69} label="E373" fill="#10856a" />
      <RoadSign x={1097} y={690} w={56} label="E95" fill="#10856a" />
      <RoadSign x={987} y={734} w={72} label="M-01" fill="#1763cf" />
      <RoadSign x={898} y={969} w={62} label="E40" fill="#10856a" />
      <RoadSign x={408} y={1252} w={56} label="E95" fill="#10856a" />

      {towns.map((t) => (
        <g key={t.x}>
          <circle cx={t.dot[0]} cy={t.dot[1]} r="5.5" fill="#15181d" stroke="#dfe6ea" strokeWidth="2" />
          {t.lines.map((line, i) => (
            <text
              key={line}
              x={t.x}
              y={t.y + i * (t.end ? 34 : 31)}
              textAnchor={t.end ? "end" : "start"}
              fontSize={t.size}
              className="font-medium"
              fill="#d6e2e6"
              stroke="#25344a"
              strokeWidth="4"
              strokeOpacity="0.7"
              strokeLinejoin="round"
              paintOrder="stroke"
            >
              {line}
            </text>
          ))}
        </g>
      ))}
      <text
        transform="translate(868 1138) rotate(61)"
        className="text-[31px] font-medium"
        fill="#4d86cc"
        stroke="#16306f"
        strokeWidth="5"
        strokeLinejoin="round"
        paintOrder="stroke"
      >
        Dnieper
      </text>

      <g>
        <circle cx="589" cy="790" r="41" fill="#3a7bea" stroke="#fff" strokeWidth="4" />
        <svg x="565" y="769" width="48" height="43" className="text-white">
          <Airplane />
        </svg>
        <circle cx="729" cy="788" r="41" fill="#22bb6c" stroke="#fff" strokeWidth="4" />
        <svg x="702" y="770" width="54" height="40" className="text-white">
          <PlaneTakeoff />
        </svg>
        <g
          className="text-[32px] font-bold"
          fill="#fff"
          textAnchor="middle"
          stroke="#1c2a3c"
          strokeWidth="4"
          strokeOpacity="0.6"
          paintOrder="stroke"
        >
          <text x="589" y="868">
            Target
          </text>
          <text x="729" y="867">
            Takeoff
          </text>
        </g>
      </g>
      <g>
        <circle cx="660" cy="812" r="87" fill="#e5474b" opacity="0.27" />
        <circle cx="660" cy="812" r="51" fill="none" stroke="#ef4447" strokeWidth="4" />
        <path d="M660 741V885M588 812H732" stroke="#ef4447" strokeWidth="6" />
        <circle cx="660" cy="812" r="9" fill="#ffb3ba" />
      </g>
    </svg>
  );
}

/* ---------- screen ---------- */

function RoundMapButton({ label, children }: { label: string; children: ReactNode }) {
  return (
    <button
      type="button"
      aria-label={label}
      className="flex size-[126px] items-center justify-center rounded-full border-2 border-white/15 bg-[#04111e]/95 text-white shadow-[0_16px_40px_rgba(0,10,20,0.45)]"
    >
      {children}
    </button>
  );
}

function SquareMapButton({ label, children }: { label: string; children: ReactNode }) {
  return (
    <button
      type="button"
      aria-label={label}
      className="flex size-[120px] items-center justify-center rounded-[40px] border-2 border-white/20 bg-[#0b1d30]/95 text-white shadow-[0_10px_34px_rgba(0,10,20,0.4)]"
    >
      {children}
    </button>
  );
}

function PointRow({
  tone,
  icon,
  label,
  value,
  coords,
}: {
  tone: string;
  icon: ReactNode;
  label: string;
  value: string;
  coords: string;
}) {
  return (
    <div className="flex h-[132px] items-center pr-6 pl-[23px]">
      <div className={`flex size-[86px] shrink-0 items-center justify-center rounded-full border-2 ${tone}`}>{icon}</div>
      <div className="ml-6 min-w-0 flex-1">
        <p className="text-[36px] leading-[48px] font-medium text-[#9eabb9]">{label}</p>
        <p className="text-[45px] leading-[56px] font-medium text-[#eff4fc]">{value}</p>
      </div>
      <p className="text-[34px] leading-[48px] text-[#7b8998] tabular-nums">{coords}</p>
    </div>
  );
}

function ForecastCard({ title }: { title: string }) {
  return (
    <article className="w-[474px] shrink-0 rounded-t-[40px] border-2 border-b-0 border-[#8a3a45] bg-[#0d1c2d] px-[30px] pt-[26px]">
      <div className="flex items-center justify-between">
        <h4 className="text-[38px] leading-[48px] font-semibold text-[#e8edf5]">{title}</h4>
        <span className="size-[27px] rounded-full bg-[#ee4549]" />
      </div>
      <div className="mt-[22px] flex h-[60px] items-center gap-10 pl-1 text-[#e6e2de]">
        <BsCloudFill className="size-[80px]" aria-hidden="true" />
        <span className="text-[46px] font-bold text-[#a8aeb6]">07:00</span>
      </div>
      <p className="mt-[27px] text-[36px] leading-[44px] font-medium text-[#9eabb9]">Wind 0 m/s</p>
      <p className="mt-[15px] text-[36px] leading-[44px] font-medium text-[#9eabb9]">At 100 m AGL</p>
    </article>
  );
}

const tabs = [
  { name: "Conditions", icon: <Airplane className="h-[70px] w-[77px]" /> },
  { name: "Route", icon: <RouteSolid className="h-[74px] w-[60px]" /> },
  { name: "Map", icon: <MapIcon className="h-[66px] w-[71px]" /> },
  { name: "Wind", icon: <WindTabIcon className="size-[70px]" /> },
  { name: "Settings", icon: <GearIcon className="size-[73px]" /> },
];

export default function App() {
  const [point, setPoint] = useState("Takeoff");
  const [tab, setTab] = useState("Route");
  const [open, setOpen] = useState(true);

  return (
    <div className="relative flex h-screen flex-col overflow-hidden bg-[#05101b] font-['Inter',sans-serif] text-white">
      <div className="flex h-[196px] shrink-0 items-center justify-between pr-[123px] pl-[178px]">
        <time className="text-[54px] leading-[60px] font-semibold">09:41</time>
        <div className="flex items-center">
          <div className="mt-[27px] mr-[23px] flex gap-[7px]" aria-hidden="true">
            <span className="size-[11px] rounded-[4px] bg-[#333d48]" />
            <span className="size-[11px] rounded-[4px] bg-[#333d48]" />
            <span className="size-[11px] rounded-[4px] bg-[#333d48]" />
            <span className="size-[11px] rounded-[4px] bg-[#333d48]" />
          </div>
          <WifiIcon className="h-[41px] w-[57px]" />
          <BatteryIcon className="ml-[23px] h-[46px] w-[92px]" />
        </div>
      </div>
      <header className="flex h-[114px] shrink-0 items-center justify-center">
        <h1 className="text-[50px] leading-[60px] font-semibold">Route</h1>
      </header>

      <main className="mt-[37px] flex min-h-0 flex-1 flex-col gap-[34px] px-[42px]">
        <section className="relative h-[931px] shrink-0 overflow-hidden rounded-[52px]">
          <RouteMap />
          <div className="pointer-events-none absolute inset-0 rounded-[52px] border-2 border-[#3a5a70]" />

          <button
            type="button"
            className="absolute top-[19px] left-9 flex h-[126px] w-[447px] items-center rounded-full border-2 border-white/20 bg-[#04111e]/95 pl-11 shadow-[0_16px_40px_rgba(0,10,20,0.35)]"
          >
            <PlaneTakeoff className="h-[35px] w-[47px]" />
            <span className="ml-[27px] text-[38px] leading-[48px] font-extrabold">Set: takeoff</span>
            <SwapIcon className="mr-[46px] ml-auto h-[42px] w-[34px] text-[#b6bcc2]" />
          </button>

          <div className="absolute top-[37px] right-9 flex flex-col gap-6">
            <RoundMapButton label="Map layers">
              <MapIcon className="h-[50px] w-[54px]" />
            </RoundMapButton>
            <RoundMapButton label="Wind overlay">
              <WindIcon className="h-[46px] w-[50px]" />
            </RoundMapButton>
          </div>

          <div className="absolute right-9 bottom-[35px] flex flex-col gap-[21px]">
            <SquareMapButton label="Zoom in">
              <span className="relative block h-[9px] w-[41px] rounded-full bg-white">
                <span className="absolute -top-4 left-4 block h-[41px] w-[9px] rounded-full bg-white" />
              </span>
            </SquareMapButton>
            <SquareMapButton label="Zoom out">
              <span className="block h-[9px] w-[41px] rounded-full bg-white" />
            </SquareMapButton>
            <SquareMapButton label="Expand map">
              <ExpandIcon className="size-[47px]" />
            </SquareMapButton>
          </div>

          <div className="absolute bottom-[20px] left-[29px] flex items-center">
            <FaApple className="mb-1 size-[40px]" aria-hidden="true" />
            <span className="text-[45px] leading-[56px] font-medium tracking-tight">Maps</span>
            <a
              href="#legal"
              className="mt-2 ml-[28px] text-[28px] leading-[36px] font-medium text-[#93a9aa] underline underline-offset-4"
            >
              Legal
            </a>
          </div>
        </section>

        <section className="shrink-0 rounded-[52px] border-2 border-[#223548] bg-[#111f30] px-[22px] py-6 shadow-[inset_0_0_50px_rgba(24,44,70,0.7)]">
          <div className="flex h-24 rounded-full bg-[#273a51] p-1.5" role="group" aria-label="Point to set">
            {["Takeoff", "Target"].map((p) => (
              <button
                key={p}
                type="button"
                aria-pressed={point === p}
                onClick={() => setPoint(p)}
                className={`flex-1 rounded-full text-[39px] leading-[48px] ${
                  point === p ? "bg-[#2382ea] font-semibold text-white" : "font-medium text-[#c8ceda]"
                }`}
              >
                {p}
              </button>
            ))}
          </div>
          <div className="mt-1.5">
            <PointRow
              tone="border-[#23705a] bg-[#143b3a] text-[#2ccb7f]"
              icon={<PlaneTakeoff className="h-[39px] w-[53px]" />}
              label="Takeoff point"
              value="Kyiv, Kyiv City, Ukraine"
              coords="50.45, 30.52"
            />
            <PointRow
              tone="border-[#28508f] bg-[#173050] text-[#3f82f2]"
              icon={<Airplane className="h-[43px] w-[48px]" />}
              label="Reconnaissance point"
              value="Calculated target"
              coords="50.45, 30.45"
            />
          </div>
          <div className="mt-2 grid grid-cols-2 gap-6">
            <button
              type="button"
              className="flex h-[114px] items-center justify-center gap-7 rounded-[36px] border-2 border-[#2a3e50] bg-[#0f2031] text-[37px] leading-[48px] font-semibold text-[#eff4fc]"
            >
              <PinIcon className="h-[42px] w-10" />
              Use forecast as takeoff
            </button>
            <button
              type="button"
              className="flex h-[114px] items-center justify-center gap-5 rounded-[36px] bg-[#3d7de8] text-[37px] leading-[48px] font-semibold text-white"
            >
              <CloudSunIcon className="h-[38px] w-[54px]" />
              Analyze
            </button>
          </div>
        </section>

        <section className="flex min-h-0 flex-1 flex-col rounded-t-[52px] border-2 border-b-0 border-[#223548] bg-[#142235]">
          <button
            type="button"
            aria-expanded={open}
            onClick={() => setOpen(!open)}
            className="flex h-[174px] shrink-0 items-center border-b border-[#35485a] pr-[42px] pl-10 text-left"
          >
            <span className="flex size-[90px] items-center justify-center rounded-full bg-[#da4547]">
              <RouteOutline className="h-12 w-10" />
            </span>
            <span className="ml-[30px] flex-1 text-[45px] leading-[54px] font-bold text-[#eff4fc]">Weather along route</span>
            <svg
              viewBox="0 0 33 20"
              className="h-5 w-[33px] text-[#a9b4c2]"
              fill="none"
              stroke="currentColor"
              strokeWidth="5.5"
              strokeLinecap="round"
              strokeLinejoin="round"
              aria-hidden="true"
            >
              <path d="M3 16.500L16.500 3.500L30 16.500" />
            </svg>
          </button>

          {open && (
            <div className="flex min-h-0 flex-1 flex-col px-10 pt-[39px]">
              <div className="flex items-start justify-between">
                <div>
                  <h2 className="text-[49px] leading-[66px] font-bold text-[#eff4fc]">
                    Critical conditions along
                    <br />
                    the route
                  </h2>
                  <p className="mt-0.5 text-[36px] leading-[46px] font-medium text-[#9eabb9]">Separate route assessment</p>
                </div>
                <div className="pt-1.5 text-center text-[#f04a4b]">
                  <p className="text-[62px] leading-[66px] font-extrabold">100/100</p>
                  <p className="mt-1 text-[34px] leading-[46px] font-semibold">risk index</p>
                </div>
              </div>
              <p className="mt-6 pr-10 text-[45px] leading-[60px] font-medium text-[#eff4fc]">
                Takeoff, 0 km: Cloud cover: 99% is outside the allowed threshold
              </p>
              <div className="mt-[30px] flex items-center justify-between text-[37px] leading-[46px] font-medium text-[#a3afbd]">
                <span className="flex items-center gap-[27px]">
                  <PinIcon className="h-[42px] w-10" />2 points
                </span>
                <span className="flex items-center gap-[27px]">
                  <ShieldCheck className="h-9 w-[30px]" />
                  Confidence 86%
                </span>
              </div>
              <hr className="mt-[31px] border-[#33465a]" />
              <div className="mt-[30px] flex min-h-0 flex-1 gap-[27px] overflow-hidden">
                <ForecastCard title="Takeoff" />
                <ForecastCard title="Target · 5 km" />
              </div>
            </div>
          )}
        </section>
      </main>

      <div className="pointer-events-none absolute inset-x-0 bottom-0 h-[370px] bg-[linear-gradient(to_bottom,rgba(5,14,29,0)_0%,rgba(5,14,29,0.28)_30%,rgba(5,14,29,0.45)_55%,rgba(5,14,29,0.85)_82%,rgba(5,14,29,0.9)_100%)]" />

      <nav
        aria-label="Main"
        className="absolute inset-x-[63px] bottom-[63px] flex h-[186px] items-center overflow-hidden rounded-full border-[3px] border-[#27487a] bg-[#1a2840]/70 px-[26px] shadow-[inset_16px_4px_14px_-6px_rgba(130,130,132,0.5)] backdrop-blur-[4px]"
      >
        {tabs.map((t) => (
          <button
            key={t.name}
            type="button"
            aria-current={tab === t.name ? "page" : undefined}
            onClick={() => setTab(t.name)}
            className={`relative flex h-[162px] flex-1 flex-col items-center ${tab === t.name ? "text-[#579ffc]" : "text-[#eaf5ff]"}`}
          >
            {tab === t.name && <span className="absolute inset-y-0 -inset-x-[17px] rounded-full bg-[#5a6880]/50" />}
            <span className="relative mt-5 flex h-[82px] items-center justify-center">{t.icon}</span>
            <span className="relative mt-0.5 text-[31px] leading-[38px] font-medium">{t.name}</span>
          </button>
        ))}
      </nav>
    </div>
  );
}
